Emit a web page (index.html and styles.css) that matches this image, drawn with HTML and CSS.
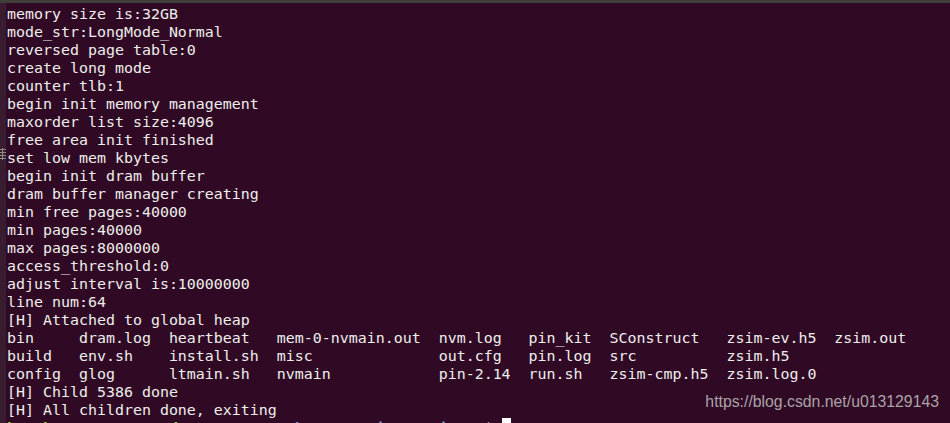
FILE: index.html
```html
<!DOCTYPE html>
<html>
<head>
<meta charset="utf-8">
<link rel="stylesheet" href="styles.css">
</head>
<body>
<div class="screen">
  <div class="topbar"></div>
  <div class="main">
    <div class="gutter">
      <svg class="grip" width="6" height="14" viewBox="0 0 6 14">
        <rect x="0" y="1" width="6" height="1" fill="#8d8a86"/>
        <rect x="0" y="4" width="6" height="1" fill="#8d8a86"/>
        <rect x="0" y="7" width="6" height="1" fill="#8d8a86"/>
        <rect x="0" y="10" width="6" height="1" fill="#8d8a86"/>
        <rect x="2" y="0" width="1" height="12" fill="#8d8a86"/>
      </svg>
    </div>
<pre class="term">memory size is:32GB
mode_str:LongMode_Normal
reversed page table:0
create long mode
counter tlb:1
begin init memory management
maxorder list size:4096
free area init finished
set low mem kbytes
begin init dram buffer
dram buffer manager creating
min free pages:40000
min pages:40000
max pages:8000000
access_threshold:0
adjust interval is:10000000
line num:64
[H] Attached to global heap
bin     dram.log  heartbeat   mem-0-nvmain.out  nvm.log   pin_kit  SConstruct   zsim-ev.h5  zsim.out
build   env.sh    install.sh  misc              out.cfg   pin.log  src          zsim.h5
config  glog      ltmain.sh   nvmain            pin-2.14  run.sh   zsim-cmp.h5  zsim.log.0
[H] Child 5386 done
[H] All children done, exiting
<span class="user">hpc@hpc-System-Product-Nam</span>:<span class="path">~/workspace/zsim-nvmain-v2</span>$ <span class="cursor"> </span></pre>
  </div>
  <div class="watermark">https://blog.csdn.net/u013129143</div>
</div>
</body>
</html>
```

FILE: styles.css
```css
html, body {
  margin: 0;
  padding: 0;
  width: 950px;
  height: 423px;
  overflow: hidden;
  background: #300a24;
}

.screen {
  position: relative;
  width: 950px;
  height: 423px;
  display: flex;
  flex-direction: column;
  overflow: hidden;
}

.topbar {
  height: 3px;
  flex: none;
  background: #3f3e3a;
}

.main {
  display: flex;
  flex: 1;
  min-height: 0;
}

.gutter {
  width: 6px;
  flex: none;
  background: #3a1c31;
}

.grip {
  display: block;
  margin-top: 145px;
}

.term {
  margin: 0;
  padding: 2px 0 0 1px;
  font-family: "DejaVu Sans Mono", "Liberation Mono", monospace;
  font-size: 14.95px;
  line-height: 18px;
  color: #eeeeec;
  white-space: pre;
}

.user {
  color: #8ae234;
  font-weight: bold;
}

.path {
  color: #729fcf;
  font-weight: bold;
}

.cursor {
  display: inline-block;
  width: 9px;
  height: 18px;
  vertical-align: top;
  margin-top: -1px;
  background: #ffffff;
}

.watermark {
  position: absolute;
  right: 11px;
  top: 393px;
  font-family: "Liberation Sans", Arial, sans-serif;
  font-size: 15.8px;
  color: #aaa2a8;
}
```
